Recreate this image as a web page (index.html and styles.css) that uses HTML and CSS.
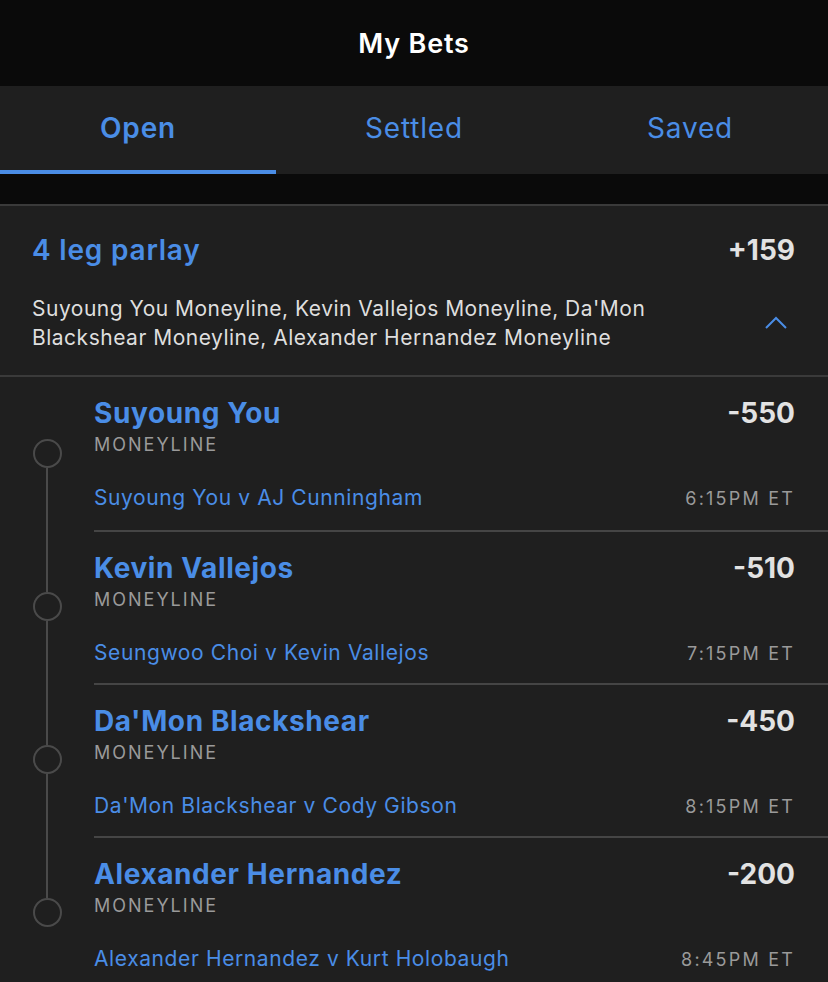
FILE: index.html
```html
<!DOCTYPE html>
<html lang="en">

<head>
    <meta charset="UTF-8">
    <meta name="viewport" content="width=device-width, initial-scale=1.0">
    <title>My Bets</title>
    <link rel="stylesheet" href="styles.css">
</head>

<body>

    <header class="topbar">
        <h1>My Bets</h1>
    </header>

    <nav class="tabs">
        <a class="tab active">Open</a>
        <a class="tab">Settled</a>
        <a class="tab">Saved</a>
    </nav>

    <section class="parlay">
        <div class="parlay-head">
            <h2>4 leg parlay</h2>
            <span class="odds">+159</span>
        </div>
        <div class="parlay-desc">
            <p>Suyoung You Moneyline, Kevin Vallejos Moneyline, Da'Mon Blackshear Moneyline, Alexander Hernandez Moneyline</p>
            <svg class="chevron" width="24" height="14" viewBox="0 0 24 14">
                <polyline points="2,12 12,2 22,12" fill="none" stroke="#4a8de6" stroke-width="2" />
            </svg>
        </div>
    </section>

    <div class="legs">
        <div class="leg">
            <div class="track"><span class="line"></span><span class="dot"></span><span class="line"></span></div>
            <div class="leg-body">
                <div class="leg-row">
                    <h3>Suyoung You</h3>
                    <span class="odds">-550</span>
                </div>
                <div class="market">MONEYLINE</div>
                <div class="leg-row match-row">
                    <span class="match">Suyoung You v AJ Cunningham</span>
                    <span class="time">6:15PM ET</span>
                </div>
            </div>
        </div>
        <div class="leg">
            <div class="track"><span class="line"></span><span class="dot"></span><span class="line"></span></div>
            <div class="leg-body">
                <div class="leg-row">
                    <h3>Kevin Vallejos</h3>
                    <span class="odds">-510</span>
                </div>
                <div class="market">MONEYLINE</div>
                <div class="leg-row match-row">
                    <span class="match">Seungwoo Choi v Kevin Vallejos</span>
                    <span class="time">7:15PM ET</span>
                </div>
            </div>
        </div>
        <div class="leg">
            <div class="track"><span class="line"></span><span class="dot"></span><span class="line"></span></div>
            <div class="leg-body">
                <div class="leg-row">
                    <h3>Da'Mon Blackshear</h3>
                    <span class="odds">-450</span>
                </div>
                <div class="market">MONEYLINE</div>
                <div class="leg-row match-row">
                    <span class="match">Da'Mon Blackshear v Cody Gibson</span>
                    <span class="time">8:15PM ET</span>
                </div>
            </div>
        </div>
        <div class="leg">
            <div class="track"><span class="line"></span><span class="dot"></span><span class="line"></span></div>
            <div class="leg-body">
                <div class="leg-row">
                    <h3>Alexander Hernandez</h3>
                    <span class="odds">-200</span>
                </div>
                <div class="market">MONEYLINE</div>
                <div class="leg-row match-row">
                    <span class="match">Alexander Hernandez v Kurt Holobaugh</span>
                    <span class="time">8:45PM ET</span>
                </div>
            </div>
        </div>
    </div>

</body>

</html>
```

FILE: styles.css
```css
/* Basic Reset */
* {
    margin: 0;
    padding: 0;
    box-sizing: border-box;
}

body {
    font-family: 'Inter', 'Liberation Sans', sans-serif;
    background-color: #0a0a0a;
    color: #e0e0e0;
    width: 828px;
}

/* Top Bar */
.topbar {
    height: 86px;
    display: flex;
    align-items: center;
    justify-content: center;
    background-color: #0a0a0a;
}

.topbar h1 {
    font-size: 27px;
    font-weight: 600;
    letter-spacing: 0.8px;
    color: #fff;
}

/* Tabs */
.tabs {
    display: flex;
    background-color: #1f1f1f;
    height: 88px;
    margin-bottom: 30px;
}

.tab {
    flex: 1;
    display: flex;
    align-items: center;
    justify-content: center;
    font-size: 28px;
    letter-spacing: 0.8px;
    color: #4a8de6;
    border-bottom: 4px solid transparent;
    padding-bottom: 1px;
}

.tab.active {
    font-weight: 600;
    border-bottom-color: #4a8de6;
}

/* Parlay Card */
.parlay {
    background-color: #1f1f1f;
    border-top: 2px solid #3a3a3a;
    border-bottom: 2px solid #3a3a3a;
    padding: 27px 33px 23px 32px;
}

.parlay-head {
    display: flex;
    justify-content: space-between;
    align-items: center;
    height: 34px;
    margin-bottom: 27px;
}

.parlay-head h2 {
    font-size: 28px;
    font-weight: 600;
    letter-spacing: 0.8px;
    color: #4a8de6;
}

.odds {
    font-size: 28px;
    font-weight: 700;
    color: #e2e2e2;
}

.parlay-desc {
    display: flex;
    align-items: center;
    justify-content: space-between;
}

.parlay-desc p {
    font-size: 21px;
    line-height: 29px;
    letter-spacing: 0.5px;
    color: #dedede;
    max-width: 660px;
}

.chevron {
    margin-right: 7px;
}

/* Legs */
.legs {
    background-color: #1f1f1f;
}

.leg {
    display: flex;
    height: 153px;
}

.track {
    width: 94px;
    display: flex;
    flex-direction: column;
    align-items: center;
}

.track .line {
    flex: 1;
    width: 2px;
    background-color: #4a4a4a;
}

.leg:first-child .track .line:first-child,
.leg:last-child .track .line:last-child {
    visibility: hidden;
}

.track .dot {
    width: 29px;
    height: 29px;
    border: 2px solid #4a4a4a;
    border-radius: 50%;
}

.leg-body {
    flex: 1;
    padding: 19px 33px 0 0;
}

.leg + .leg .leg-body {
    border-top: 2px solid #454545;
}

.leg-row {
    display: flex;
    justify-content: space-between;
    align-items: center;
    height: 34px;
}

.leg-row h3 {
    font-size: 28px;
    font-weight: 700;
    letter-spacing: 0.6px;
    color: #4a8de6;
}

.market {
    font-size: 18px;
    letter-spacing: 2px;
    color: #9a9a9a;
    margin-top: 4px;
}

.match-row {
    margin-top: 30px;
    align-items: baseline;
}

.match {
    font-size: 21px;
    letter-spacing: 0.6px;
    color: #4a8de6;
}

.time {
    font-size: 18px;
    letter-spacing: 2.2px;
    color: #9a9a9a;
}
```
